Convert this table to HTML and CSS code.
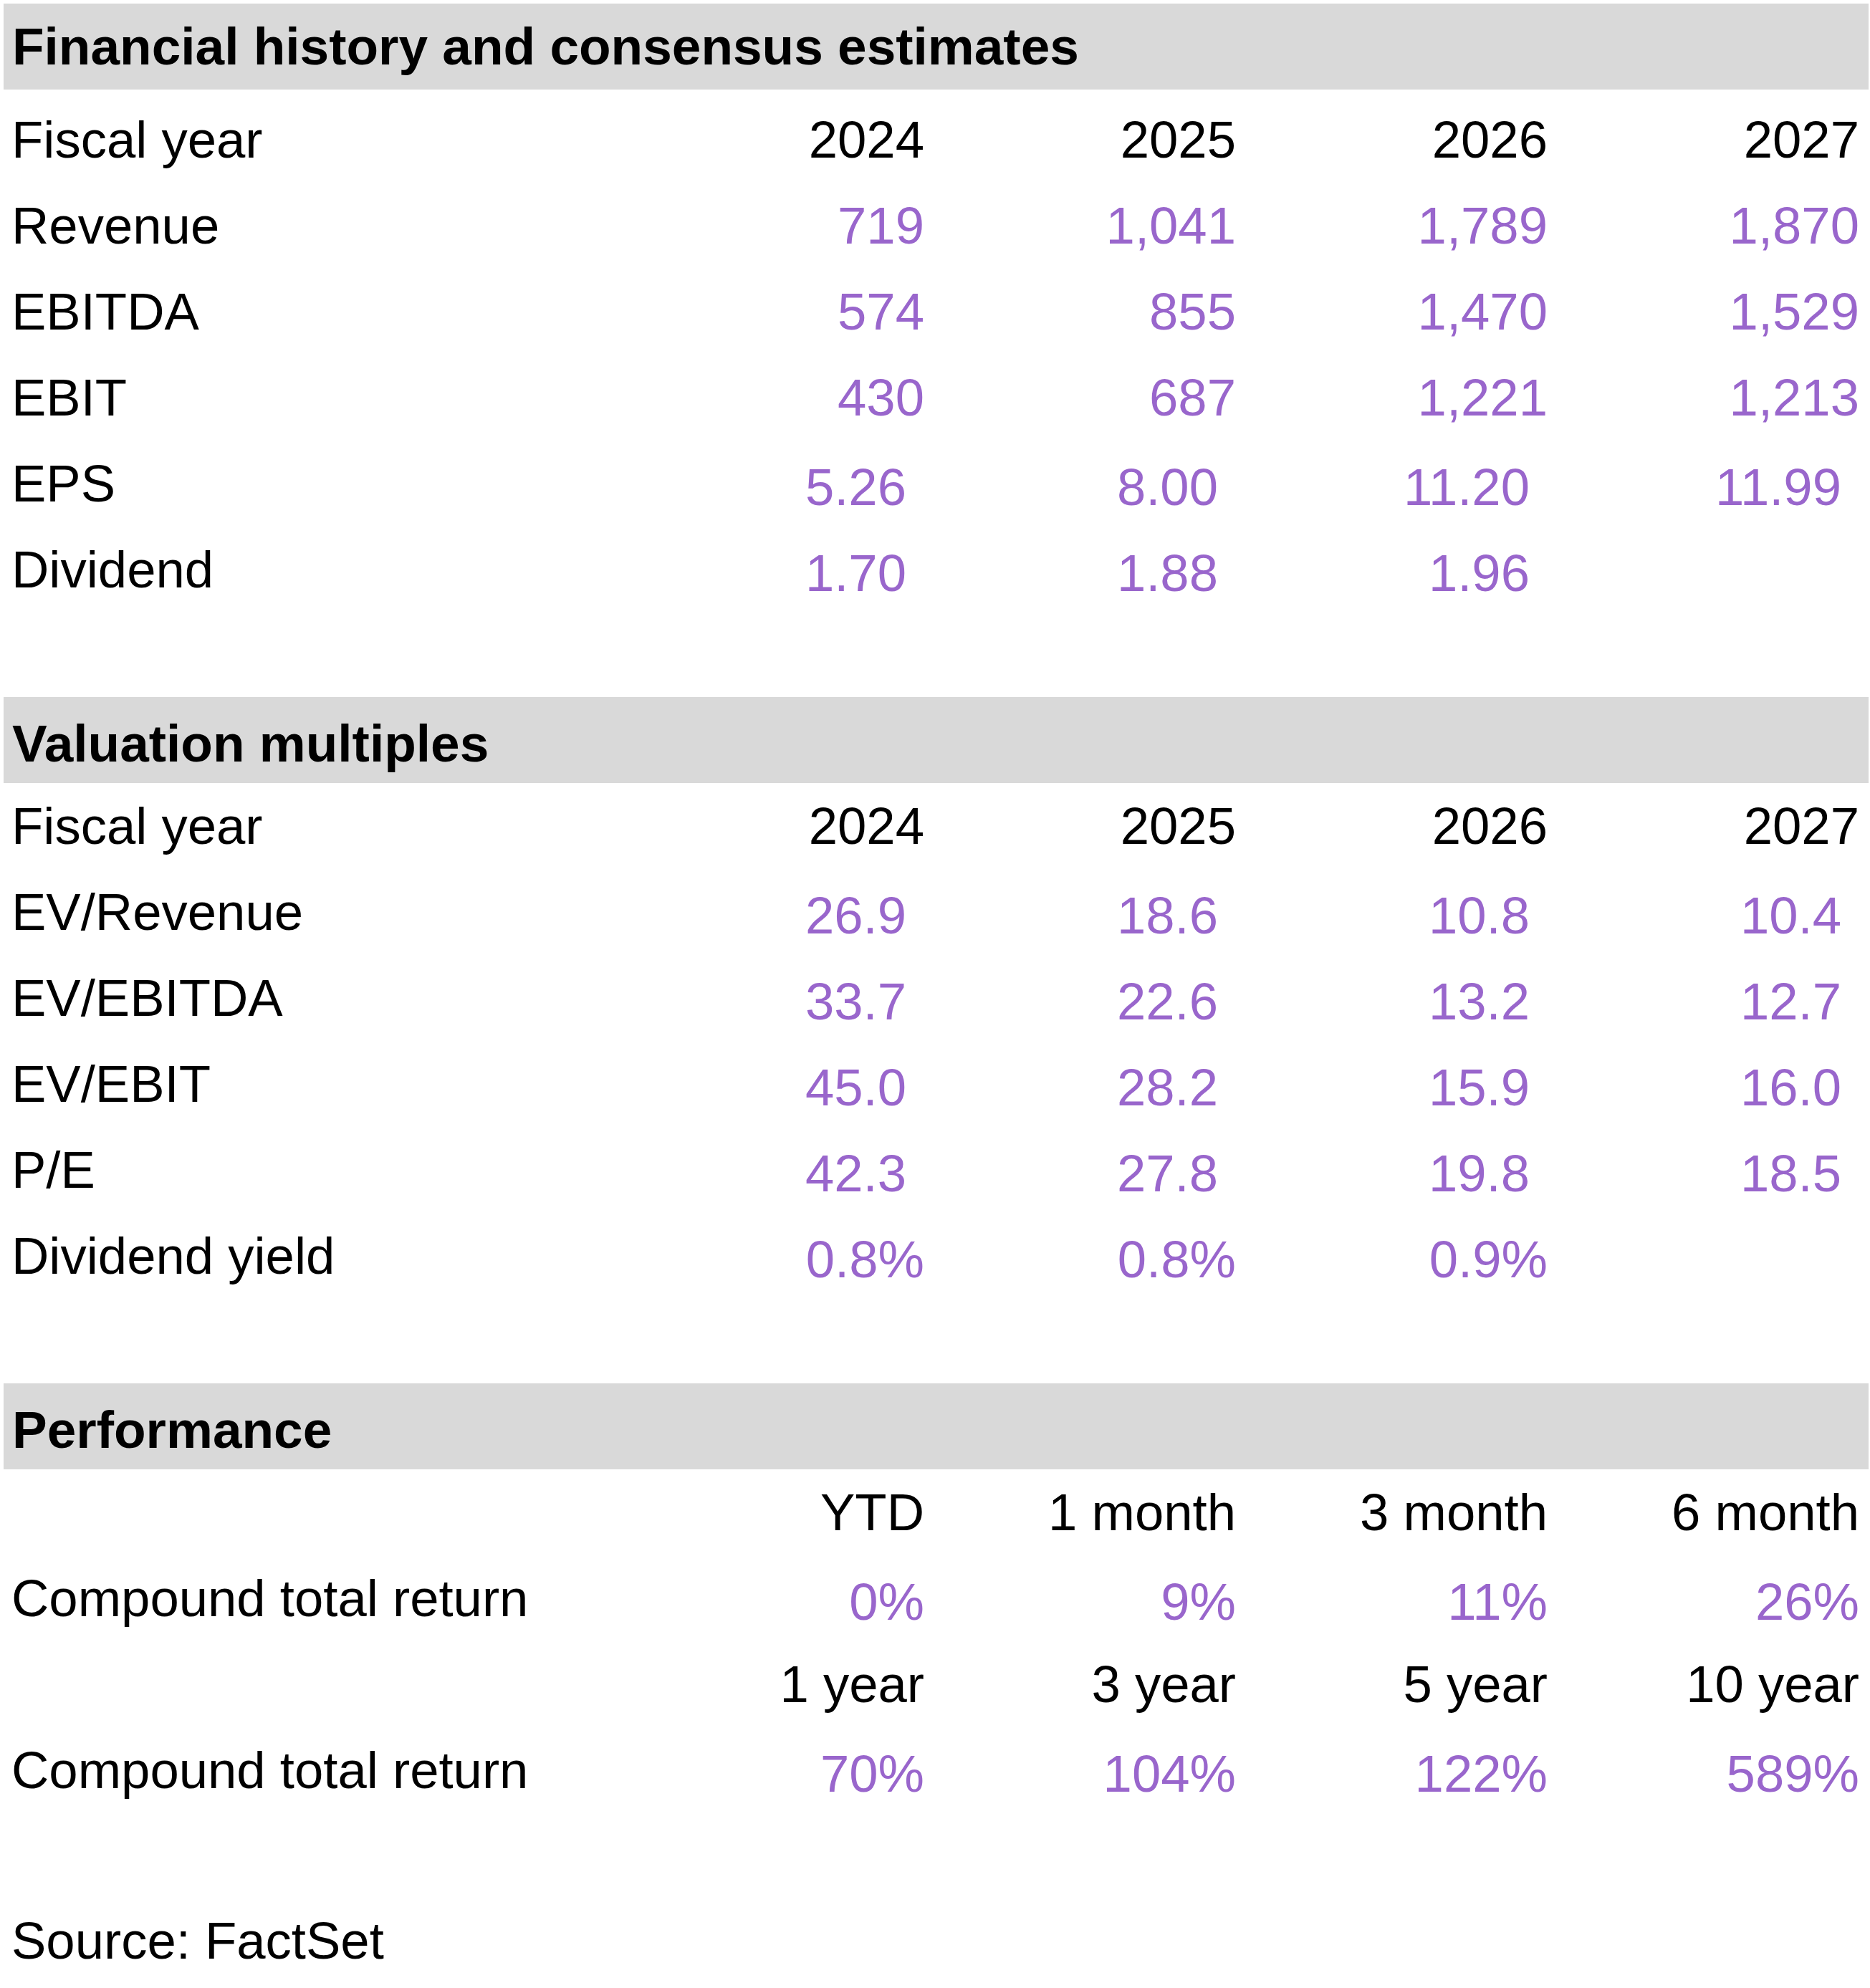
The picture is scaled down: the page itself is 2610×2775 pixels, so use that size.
FILE: index.html
```html
<!DOCTYPE html>
<html lang="en">
<head>
<meta charset="utf-8">
<title>Financial history and consensus estimates</title>
<link rel="stylesheet" href="styles.css">
</head>
<body>
<div class="sheet">
  <section class="block">
    <div class="band band--first">Financial history and consensus estimates</div>
    <div class="grid grid--first">
      <div class="lbl">Fiscal year</div>
      <div class="num">2024</div><div class="num">2025</div><div class="num">2026</div><div class="num">2027</div>

      <div class="lbl">Revenue</div>
      <div class="num est">719</div><div class="num est">1,041</div><div class="num est">1,789</div><div class="num est">1,870</div>

      <div class="lbl">EBITDA</div>
      <div class="num est">574</div><div class="num est">855</div><div class="num est">1,470</div><div class="num est">1,529</div>

      <div class="lbl">EBIT</div>
      <div class="num est">430</div><div class="num est">687</div><div class="num est">1,221</div><div class="num est">1,213</div>

      <div class="lbl">EPS</div>
      <div class="num est low pad">5.26</div><div class="num est low pad">8.00</div><div class="num est low pad">11.20</div><div class="num est low pad">11.99</div>

      <div class="lbl">Dividend</div>
      <div class="num est low pad">1.70</div><div class="num est low pad">1.88</div><div class="num est low pad">1.96</div><div class="num est low pad"></div>
    </div>
  </section>

  <section class="block">
    <div class="band band--sub">Valuation multiples</div>
    <div class="grid">
      <div class="lbl">Fiscal year</div>
      <div class="num">2024</div><div class="num">2025</div><div class="num">2026</div><div class="num">2027</div>

      <div class="lbl">EV/Revenue</div>
      <div class="num est low pad">26.9</div><div class="num est low pad">18.6</div><div class="num est low pad">10.8</div><div class="num est low pad">10.4</div>

      <div class="lbl">EV/EBITDA</div>
      <div class="num est low pad">33.7</div><div class="num est low pad">22.6</div><div class="num est low pad">13.2</div><div class="num est low pad">12.7</div>

      <div class="lbl">EV/EBIT</div>
      <div class="num est low pad">45.0</div><div class="num est low pad">28.2</div><div class="num est low pad">15.9</div><div class="num est low pad">16.0</div>

      <div class="lbl">P/E</div>
      <div class="num est low pad">42.3</div><div class="num est low pad">27.8</div><div class="num est low pad">19.8</div><div class="num est low pad">18.5</div>

      <div class="lbl">Dividend yield</div>
      <div class="num est low">0.8%</div><div class="num est low">0.8%</div><div class="num est low">0.9%</div><div class="num est low"></div>
    </div>
  </section>

  <section class="block">
    <div class="band band--sub">Performance</div>
    <div class="grid">
      <div class="lbl"></div>
      <div class="num">YTD</div><div class="num">1 month</div><div class="num">3 month</div><div class="num">6 month</div>

      <div class="lbl">Compound total return</div>
      <div class="num est low">0%</div><div class="num est low">9%</div><div class="num est low">11%</div><div class="num est low">26%</div>

      <div class="lbl"></div>
      <div class="num">1 year</div><div class="num">3 year</div><div class="num">5 year</div><div class="num">10 year</div>

      <div class="lbl">Compound total return</div>
      <div class="num est low">70%</div><div class="num est low">104%</div><div class="num est low">122%</div><div class="num est low">589%</div>
    </div>
  </section>

  <div class="source">Source: FactSet</div>
</div>
</body>
</html>
```

FILE: styles.css
```css
html, body {
  margin: 0;
  padding: 0;
  background: #ffffff;
}

body {
  font-family: "Liberation Sans", Arial, sans-serif;
  font-size: 73px;
  color: #000000;
}

.sheet {
  width: 2603px;
  padding: 5px 2px 0 5px;
}

.block {
  margin-bottom: 118px;
}

.band {
  box-sizing: border-box;
  height: 120px;
  background: #d9d9d9;
  font-weight: bold;
  line-height: 120px;
  padding-left: 12px;
  white-space: nowrap;
}

.band--sub {
  line-height: 110px;
  padding-top: 10px;
}

.grid {
  display: grid;
  grid-template-columns: 850px repeat(4, 435px);
  grid-auto-rows: 120px;
  font-size: 72.5px;
  line-height: 120px;
}

.grid--first {
  margin-top: 10px;
}

.lbl {
  padding-left: 11px;
  white-space: nowrap;
}

.num {
  text-align: right;
  white-space: nowrap;
}

.est {
  color: #9966cc;
}

.low {
  line-height: 110px;
  padding-top: 10px;
}

.pad {
  padding-right: 25px;
}

.source {
  padding-left: 11px;
  font-size: 72.5px;
  line-height: 120px;
  white-space: nowrap;
}
```
